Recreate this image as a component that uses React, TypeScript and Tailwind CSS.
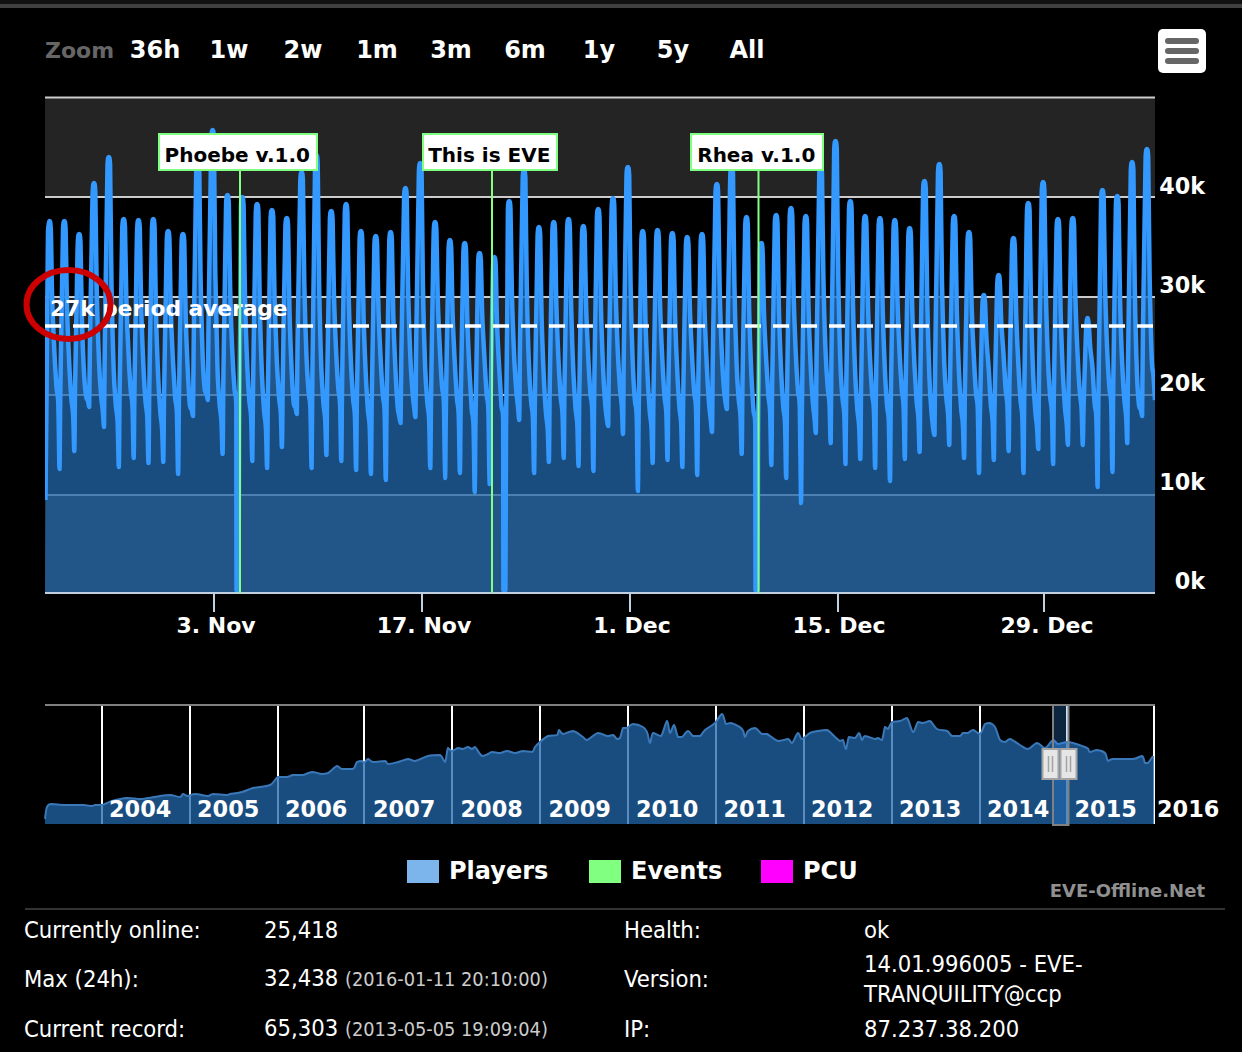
import React from 'react';

const PEAKS = [
  221, 221, 234, 183, 157, 219, 220, 219, 231, 234, 145, 130, 195, 197, 204, 210, 218, 172, 155, 211, 204, 231, 236, 232, 188, 163,
  222, 240, 243, 253, 257, 201, 170, 227, 222, 219, 226, 209, 198, 167, 231, 230, 233, 237, 234, 184, 165, 217, 243, 215, 208, 216, 165, 141,
  201, 216, 218, 220, 228, 181, 164, 216, 232, 295, 275, 238, 203, 182, 219, 218, 318, 190, 196, 162, 149,
];

const TROUGHS = [
  469, 451, 407, 427, 467, 458, 463, 462, 474, 416, 400, 454, 593, 461, 468, 447, 414, 468, 455, 461, 470, 474, 480, 423, 417,
  468, 478, 473, 492, 484, 593, 420, 473, 462, 458, 466, 471, 426, 434, 491, 463, 460, 467, 475, 432, 409, 454, 593, 465, 478, 503, 433, 443,
  464, 459, 468, 481, 459, 452, 435, 445, 458, 473, 460, 451, 473, 449, 464, 445, 445, 487, 472, 443, 416,
];

const OVERVIEW: [number, number][] = [
  [45, 819], [47, 807], [52, 804], [65, 805], [83, 805], [92, 806], [95, 805], [102, 805], [112, 801], [127, 798], [142, 799], [160, 796],
  [170, 795], [180, 797], [183, 794], [188, 796], [195, 794], [208, 796], [213, 794], [227, 795], [230, 794], [242, 792], [253, 788], [270, 785],
  [278, 777], [287, 777], [293, 775], [303, 775], [312, 772], [322, 774], [328, 773], [337, 766], [342, 769], [353, 769], [357, 762], [362, 761],
  [364, 763], [368, 759], [373, 762], [385, 761], [388, 764], [398, 762], [408, 759], [415, 761], [428, 756], [440, 755], [445, 762], [448, 748],
  [452, 751], [458, 748], [463, 749], [468, 747], [472, 749], [475, 747], [482, 756], [488, 754], [492, 752], [500, 753], [507, 751], [515, 753],
  [523, 751], [532, 752], [535, 747], [540, 742], [548, 736], [557, 735], [559, 730], [563, 734], [573, 731], [583, 737], [587, 740], [598, 733],
  [607, 736], [613, 735], [617, 739], [620, 738], [623, 728], [627, 728], [633, 724], [643, 727], [647, 732], [650, 743], [653, 733], [661, 736],
  [667, 721], [670, 733], [674, 725], [678, 737], [682, 737], [688, 731], [693, 736], [700, 736], [705, 730], [715, 723], [722, 714], [726, 724],
  [731, 723], [742, 729], [745, 737], [748, 731], [755, 728], [762, 734], [767, 734], [778, 741], [788, 739], [792, 743], [798, 733], [802, 739],
  [810, 733], [818, 731], [827, 730], [835, 737], [840, 741], [843, 740], [846, 749], [849, 737], [855, 738], [859, 733], [862, 740], [865, 736],
  [875, 739], [878, 738], [882, 740], [885, 727], [888, 729], [892, 722], [900, 721], [907, 718], [913, 732], [918, 722], [923, 723], [930, 721],
  [937, 729], [947, 731], [952, 736], [960, 736], [963, 733], [968, 733], [973, 730], [980, 734], [985, 724], [990, 723], [995, 727], [1000, 740],
  [1005, 742], [1010, 739], [1020, 745], [1028, 749], [1037, 743], [1045, 748], [1053, 740], [1058, 744], [1067, 742], [1073, 743], [1087, 748],
  [1090, 752], [1097, 750], [1105, 753], [1108, 761], [1113, 759], [1133, 759], [1142, 756], [1145, 763], [1148, 763], [1153, 756],
];

const BUTTONS = ['36h', '1w', '2w', '1m', '3m', '6m', '1y', '5y', 'All'];
const FLAGS = [
  { label: 'Phoebe v.1.0', x: 159, w: 158, line: 240 },
  { label: 'This is EVE', x: 423, w: 134, line: 492 },
  { label: 'Rhea v.1.0', x: 691, w: 132, line: 758.5 },
];
const Y_LABELS = [
  { label: '40k', y: 194 },
  { label: '30k', y: 293 },
  { label: '20k', y: 391 },
  { label: '10k', y: 490 },
  { label: '0k', y: 589 },
];
const X_LABELS = [
  { label: '3. Nov', tick: 214, x: 216 },
  { label: '17. Nov', tick: 422, x: 424 },
  { label: '1. Dec', tick: 630, x: 632 },
  { label: '15. Dec', tick: 838, x: 839 },
  { label: '29. Dec', tick: 1044, x: 1047 },
];
const YEARS = [
  { year: '2004', x: 102, lx: 109 },
  { year: '2005', x: 190, lx: 197 },
  { year: '2006', x: 278, lx: 285 },
  { year: '2007', x: 364, lx: 373 },
  { year: '2008', x: 452, lx: 460.5 },
  { year: '2009', x: 540, lx: 548.5 },
  { year: '2010', x: 628, lx: 636 },
  { year: '2011', x: 716, lx: 723.5 },
  { year: '2012', x: 804, lx: 811 },
  { year: '2013', x: 892, lx: 899 },
  { year: '2014', x: 980, lx: 987 },
  { year: '2015', x: 1067, lx: 1074.5 },
  { year: '2016', x: 1154, lx: 1157 },
];

const clamp = (v: number, a: number, b: number) => Math.min(Math.max(v, Math.min(a, b)), Math.max(a, b));

// catmull-rom through the points, y of the handles kept inside each segment so peaks don't overshoot
function smooth(points: [number, number][]) {
  let d = `M${points[0][0]} ${points[0][1]}`;
  for (let i = 0; i < points.length - 1; i++) {
    const p0 = points[Math.max(i - 1, 0)];
    const p1 = points[i];
    const p2 = points[i + 1];
    const p3 = points[Math.min(i + 2, points.length - 1)];
    const c1x = p1[0] + (p2[0] - p0[0]) / 6;
    const c1y = clamp(p1[1] + (p2[1] - p0[1]) / 6, p1[1], p2[1]);
    const c2x = p2[0] - (p3[0] - p1[0]) / 6;
    const c2y = clamp(p2[1] - (p3[1] - p1[1]) / 6, p1[1], p2[1]);
    d += `C${c1x.toFixed(1)} ${c1y.toFixed(1)} ${c2x.toFixed(1)} ${c2y.toFixed(1)} ${p2[0].toFixed(1)} ${p2[1].toFixed(1)}`;
  }
  return d;
}

function playersPoints() {
  const pts: [number, number][] = [[45.5, 500], [46.5, 400], [48, 232]];
  PEAKS.forEach((py, i) => {
    const px = 49.5 + i * 14.83;
    const ty = TROUGHS[i];
    const sh = Math.max(352 + ((i * 37) % 26), py + 30);
    pts.push([px, py], [px + 1.3, py + 8], [px + 2.7, py + (sh - py) * 0.6], [px + 4.9, sh]);
    if (ty === undefined) {
      pts.push([px + 6.5, 375], [1155, 400]);
      return;
    }
    const nextY = PEAKS[i + 1];
    pts.push([px + 7, Math.min(sh + 35, ty - 10)], [px + 8.8, Math.min(sh + 52, ty - 6)]);
    if (ty === 593) {
      pts.push([px + 9, 590], [px + 11, 590]);
      pts.push([px + 11.6, 430], [px + 12.8, 320]);
    } else {
      pts.push([px + 10, ty]);
      pts.push([px + 10.8, ty + (nextY - ty) * 0.3], [px + 12.4, ty + (nextY - ty) * 0.7]);
    }
    pts.push([px + 13.5, nextY + 8]);
  });
  return pts;
}

const playersLine = smooth(playersPoints());
const overviewLine = smooth(OVERVIEW);

function MainChart() {
  return (
    <svg viewBox="0 94 1242 560" className="block w-[1242px] h-[560px]">
      <defs>
        <clipPath id="plot">
          <rect x="45" y="97" width="1110" height="496" />
        </clipPath>
      </defs>

      {/* bands + grid */}
      <rect x="45" y="97" width="1110" height="100" fill="#242424" />
      <rect x="45" y="297" width="1110" height="98" fill="#242424" />
      <rect x="45" y="495" width="1110" height="98" fill="#242424" />
      {[97.5, 197, 297, 395, 495].map((y) => (
        <line key={y} x1="45" x2="1155" y1={y} y2={y} stroke="#cccccc" strokeWidth="2" />
      ))}

      {/* players */}
      <g clipPath="url(#plot)">
        <path d={`${playersLine}L1155 593L45 593Z`} fill="#2267ab" fillOpacity="0.75" />
        <path d={playersLine} fill="none" stroke="#3399ff" strokeWidth="4.5" strokeLinejoin="round" />
      </g>

      {/* x axis */}
      <line x1="45" x2="1155" y1="593" y2="593" stroke="#c0d0e0" strokeWidth="2" />
      {X_LABELS.map((t) => (
        <g key={t.label}>
          <line x1={t.tick} x2={t.tick} y1="594" y2="612" stroke="#c0d0e0" strokeWidth="2" />
          <text x={t.x} y="633" textAnchor="middle" fill="#ffffff" fontWeight="700" fontSize="22">
            {t.label}
          </text>
        </g>
      ))}
      {Y_LABELS.map((t) => (
        <text key={t.label} x="1205" y={t.y} textAnchor="end" fill="#ffffff" fontWeight="700" fontSize="22.3">
          {t.label}
        </text>
      ))}

      {/* average */}
      <text x="50" y="316" fill="#ffffff" fontWeight="700" fontSize="21.7">
        27k period average
      </text>
      <line x1="45" x2="1154" y1="326" y2="326" stroke="#ffffff" strokeWidth="3.6" strokeDasharray="16 12" />

      {/* flags */}
      {FLAGS.map((f) => (
        <g key={f.label}>
          <line x1={f.line} x2={f.line} y1="170" y2="593" stroke="#80ff80" strokeWidth="2" />
          <rect x={f.x} y="134" width={f.w} height="36" fill="#ffffff" stroke="#80ff80" strokeWidth="2" />
          <text x={f.x + f.w / 2 - 0.7} y="161.5" textAnchor="middle" fill="#000000" fontWeight="700" fontSize="20">
            {f.label}
          </text>
        </g>
      ))}

      <ellipse cx="68.5" cy="304.5" rx="42" ry="34.5" fill="none" stroke="#cc0000" strokeWidth="6" />
    </svg>
  );
}

function Handle({ x }: { x: number }) {
  return (
    <g>
      <rect x={x} y="749" width="16" height="30" fill="#e6e6e6" stroke="#a3a3a3" strokeWidth="2" />
      <line x1={x + 6} x2={x + 6} y1="756" y2="772" stroke="#a3a3a3" strokeWidth="1.5" />
      <line x1={x + 10} x2={x + 10} y1="756" y2="772" stroke="#a3a3a3" strokeWidth="1.5" />
    </g>
  );
}

function Navigator() {
  return (
    <svg viewBox="0 654 1242 180" className="block w-[1242px] h-[180px]">
      <line x1="45" x2="1155" y1="705" y2="705" stroke="#808080" strokeWidth="2" />
      {YEARS.map((y) => (
        <line key={y.year} x1={y.x} x2={y.x} y1="706" y2="824" stroke="#ffffff" strokeWidth="2" />
      ))}

      <path d={`${overviewLine}L1154 756L1154 824L45 824Z`} fill="#2267ab" fillOpacity="0.75" />
      <path d={overviewLine} fill="none" stroke="#3a78b8" strokeWidth="2" />

      {YEARS.map((y) => (
        <text key={y.year} x={y.lx} y="817" fill="#ffffff" fontWeight="700" fontSize="22.4">
          {y.year}
        </text>
      ))}

      <rect x="1053" y="705" width="15.5" height="120" fill="#3399ff" fillOpacity="0.25" stroke="#808080" strokeWidth="2" />
      <Handle x={1042.5} />
      <Handle x={1060.5} />
    </svg>
  );
}

function LegendItem({ color, label, width }: { color: string; label: string; width: string }) {
  return (
    <div className={`flex items-center gap-2.5 ${width}`}>
      <span className={`block w-8 h-[23px] ${color}`} />
      <span className="text-[24px] leading-[25px] font-bold text-white">{label}</span>
    </div>
  );
}

function Stat({ label, children }: { label: string; children: React.ReactNode }) {
  return (
    <>
      <div className="self-center">{label}</div>
      <div className="self-center">{children}</div>
    </>
  );
}

export default function App() {
  return (
    <div className="w-[1242px] h-[1052px] overflow-hidden bg-black font-['DejaVu_Sans',sans-serif]">
      <div className="h-1 bg-[#111111]" />
      <div className="h-1 bg-[#404040]" />

      {/* range selector */}
      <div className="h-[86px] flex items-start pt-[22px] pl-[45px] pr-[36px]">
        <span className="w-[73px] pt-[5px] text-[22px] leading-[32px] font-bold text-[#666666]">Zoom</span>
        {BUTTONS.map((b) => (
          <span key={b} className="w-[74px] text-center text-[24px] leading-[40px] font-bold text-white">
            {b}
          </span>
        ))}
        <button className="ml-auto -mt-px w-12 h-11 bg-white rounded-[5px] flex flex-col items-center justify-center gap-1">
          <span className="block w-[34px] h-1.5 rounded-[3px] bg-[#666666]" />
          <span className="block w-[34px] h-1.5 rounded-[3px] bg-[#666666]" />
          <span className="block w-[34px] h-1.5 rounded-[3px] bg-[#666666]" />
        </button>
      </div>

      <MainChart />
      <Navigator />

      {/* legend */}
      <div className="h-[74px] flex items-start pt-[25px] pl-[407px] pr-[37px]">
        <LegendItem color="bg-[#7cb5ec]" label="Players" width="w-[182px]" />
        <LegendItem color="bg-[#80ff80]" label="Events" width="w-[172px]" />
        <LegendItem color="bg-[#ff00ff]" label="PCU" width="w-[100px]" />
        <span className="ml-auto mt-[20px] text-[18px] leading-[24px] font-bold text-[#909090]">EVE-Offline.Net</span>
      </div>

      {/* stats */}
      <div className="ml-[25px] w-[1200px] border-t-2 border-[#333333] pt-[5px]">
        <div className="grid grid-cols-[240px_360px_240px_360px] -ml-px text-[23.6px] leading-[30px] text-white font-['DejaVu_Sans_Condensed','DejaVu_Sans',sans-serif] gap-y-[4px]">
          <Stat label="Currently online:">25,418</Stat>
          <Stat label="Health:">ok</Stat>
          <Stat label="Max (24h):">
            32,438 <small className="text-[19.8px] text-[#cccccc]">(2016-01-11 20:10:00)</small>
          </Stat>
          <Stat label="Version:">
            14.01.996005 - EVE-
            <br />
            TRANQUILITY@ccp
          </Stat>
          <Stat label="Current record:">
            65,303 <small className="text-[19.8px] text-[#cccccc]">(2013-05-05 19:09:04)</small>
          </Stat>
          <Stat label="IP:">87.237.38.200</Stat>
        </div>
      </div>
    </div>
  );
}
